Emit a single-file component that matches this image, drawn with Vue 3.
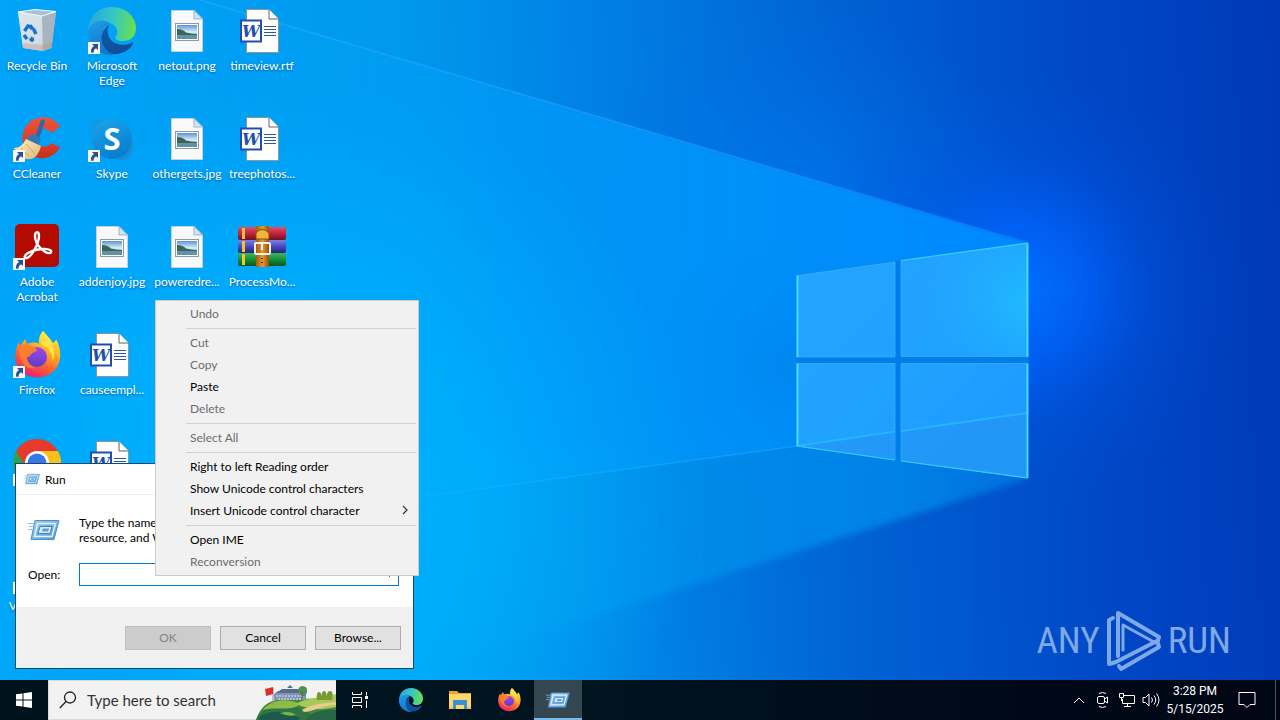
<script setup>
import { ref } from 'vue'

const shortcuts = [
  { icon: 'bin', label: 'Recycle Bin' },
  { icon: 'ccleaner', label: 'CCleaner', link: true },
  { icon: 'acrobat', label: 'Adobe Acrobat', link: true },
  { icon: 'firefox', label: 'Firefox', link: true },
  { icon: 'chrome', label: 'Google Chrome', link: true },
  { icon: 'vlc', label: 'VLC media player', link: true },
  { icon: 'edge', label: 'Microsoft Edge', link: true },
  { icon: 'skype', label: 'Skype', link: true },
  { icon: 'picture', label: 'addenjoy.jpg' },
  { icon: 'word', label: 'causeempl...' },
  { icon: 'word', label: '' },
  null,
  { icon: 'picture', label: 'netout.png' },
  { icon: 'picture', label: 'othergets.jpg' },
  { icon: 'picture', label: 'poweredre...' },
  null,
  null,
  null,
  { icon: 'word', label: 'timeview.rtf' },
  { icon: 'word', label: 'treephotos...' },
  { icon: 'winrar', label: 'ProcessMo...' },
]

const menuGroups = [
  [{ label: 'Undo', disabled: true }],
  [
    { label: 'Cut', disabled: true },
    { label: 'Copy', disabled: true },
    { label: 'Paste' },
    { label: 'Delete', disabled: true },
  ],
  [{ label: 'Select All', disabled: true }],
  [
    { label: 'Right to left Reading order' },
    { label: 'Show Unicode control characters' },
    { label: 'Insert Unicode control character', submenu: true },
  ],
  [{ label: 'Open IME' }, { label: 'Reconversion', disabled: true }],
]

const command = ref('')
</script>

<template>
  <div class="screen">
    <svg class="defs" aria-hidden="true">
      <defs>
        <linearGradient id="edgeTop" x1="0" y1="0.4" x2="1" y2="0.5">
          <stop offset="0" stop-color="#2aa5dc" /><stop offset="0.5" stop-color="#35c6c8" /><stop offset="1" stop-color="#6ae04c" />
        </linearGradient>
        <linearGradient id="edgeLeft" x1="0" y1="0" x2="0.4" y2="1">
          <stop offset="0" stop-color="#1d9fe6" /><stop offset="1" stop-color="#1276cf" />
        </linearGradient>
        <linearGradient id="edgeLow" x1="0" y1="0" x2="1" y2="1">
          <stop offset="0" stop-color="#0e5aa6" /><stop offset="1" stop-color="#114a94" />
        </linearGradient>
        <linearGradient id="skypeFill" x1="0" y1="0" x2="0.4" y2="1">
          <stop offset="0" stop-color="#1ba6ea" /><stop offset="1" stop-color="#087fd0" />
        </linearGradient>
        <linearGradient id="foxBody" x1="0.8" y1="0" x2="0.3" y2="1">
          <stop offset="0" stop-color="#fff04a" /><stop offset="0.4" stop-color="#ffab25" /><stop offset="0.7" stop-color="#ff5a35" /><stop offset="1" stop-color="#e91e78" />
        </linearGradient>
        <linearGradient id="foxCore" x1="0.5" y1="0" x2="0.4" y2="1">
          <stop offset="0" stop-color="#a146e8" /><stop offset="1" stop-color="#5540c8" />
        </linearGradient>
        <linearGradient id="cRed" x1="0" y1="0" x2="0" y2="1">
          <stop offset="0" stop-color="#f0533c" /><stop offset="1" stop-color="#c9301c" />
        </linearGradient>
        <linearGradient id="brush" x1="0" y1="0" x2="1" y2="1">
          <stop offset="0" stop-color="#fff0c2" /><stop offset="1" stop-color="#e0b878" />
        </linearGradient>
        <linearGradient id="binSide" x1="0" y1="0" x2="1" y2="1">
          <stop offset="0" stop-color="#dceaf3" /><stop offset="0.6" stop-color="#bccbd6" /><stop offset="1" stop-color="#a69f9f" />
        </linearGradient>
        <linearGradient id="photo" x1="0" y1="0" x2="0" y2="1">
          <stop offset="0" stop-color="#5b93da" /><stop offset="0.5" stop-color="#d9edf7" /><stop offset="1" stop-color="#7fb0cc" />
        </linearGradient>
        <linearGradient id="runFill" x1="0" y1="0" x2="1" y2="1">
          <stop offset="0" stop-color="#a5d0ef" /><stop offset="1" stop-color="#4e97d3" />
        </linearGradient>
        <linearGradient id="bookR" x1="0" y1="0" x2="0" y2="1">
          <stop offset="0" stop-color="#e0506a" /><stop offset="0.5" stop-color="#c02440" /><stop offset="1" stop-color="#701024" />
        </linearGradient>
        <linearGradient id="bookB" x1="0" y1="0" x2="0" y2="1">
          <stop offset="0" stop-color="#7d80e0" /><stop offset="0.5" stop-color="#484bc0" /><stop offset="1" stop-color="#262570" />
        </linearGradient>
        <linearGradient id="bookG" x1="0" y1="0" x2="0" y2="1">
          <stop offset="0" stop-color="#3cb860" /><stop offset="0.5" stop-color="#15913a" /><stop offset="1" stop-color="#07501c" />
        </linearGradient>
        <linearGradient id="strap" x1="0" y1="0" x2="1" y2="0">
          <stop offset="0" stop-color="#a65a10" /><stop offset="0.5" stop-color="#e09a30" /><stop offset="1" stop-color="#9a500c" />
        </linearGradient>
      </defs>

      <symbol id="arrow" viewBox="0 0 12 12">
        <rect width="12" height="12" fill="#f7f7fa" />
        <path d="M4 2h6v6L8 6.200C6 7.400 5.400 8.800 5.600 10.800H3.200C2.400 8 3.600 5.600 6 4z" fill="#28518f" />
      </symbol>

      <symbol id="bin" viewBox="0 0 48 48">
        <path d="M5 5 22 2.500 43 4.500 38.500 41 30 44 10 41z" fill="url(#binSide)" />
        <path d="M5 5 29 9 30 44 10 41z" fill="#dbe4ea" opacity=".75" />
        <path d="M29 9 43 4.500 38.500 41 30 44z" fill="#a9b4bf" />
        <path d="M5 5 22 2.500 43 4.500 29 9z" fill="#a7c2d4" stroke="#f4fafd" />
        <path d="M10 36l20 2 9-3-1 6-8 3-20-3z" fill="#c58d7d" opacity=".35" />
        <g fill="none" stroke="#1472c9" stroke-width="3.500">
          <path d="M11.500 24l3.500-5 3 1" /><path d="M20.500 22l2.500 5" /><path d="M21 32l-4 1M14 32l-3-4" />
        </g>
        <path d="M18 17l4 5-5 1zM19 29l-3 4 4 2.500z" fill="#1472c9" />
      </symbol>

      <symbol id="edge" viewBox="0 0 48 48">
        <path d="M0 25C0 10 10 0 24 0 39 0 48 11 48 21 48 30 42 34 35 34 29 34 26 32 28 29 31 26 29 18 22 16 12 13 3 18 0 25z" fill="url(#edgeTop)" />
        <path d="M0 25C2 15 13 10 22 16 18 18 13 23 14 32 15 41 22 47 27 48 12 49 0 39 0 25z" fill="url(#edgeLeft)" />
        <path d="M22 17C15 22 11 29 15 38 18 44 23 48 29 47 37 46 42 42 45 37 45 35 44 35 43 36 32 41 21 35 20 27 19 23 20 19 22 17z" fill="url(#edgeLow)" />
      </symbol>

      <symbol id="ccleaner" viewBox="0 0 48 48">
        <path d="M47 12C42 2 29-1 18 6 7 14 7 30 16 38 26 47 41 44 47 32L38 28C35 33 28 33 25 28 21 22 23 15 29 14 33 13 36 15 38 18z" fill="url(#cRed)" />
        <path d="M28 5q3-2 4 1L25 27l-4-2z" fill="#2b69a4" />
        <path d="M15 22q7-6 13 3l-3 6-12-5z" fill="#2f79b8" />
        <path d="M13 24 28 31C26 39 22 43 18 44 10 45 4 41 1 33 6 33 10 30 13 24z" fill="url(#brush)" />
        <path d="M8 33l8 8M13 29l9 10" stroke="#d0a466" fill="none" />
      </symbol>

      <symbol id="skype" viewBox="0 0 48 48">
        <circle cx="15" cy="16" r="12" fill="#1399e3" /><circle cx="33" cy="33" r="12" fill="#178ed8" />
        <circle cx="24" cy="24" r="20" fill="url(#skypeFill)" />
        <text x="24" y="35" text-anchor="middle" class="skype-letter">S</text>
      </symbol>

      <symbol id="acrobat" viewBox="0 0 48 48">
        <rect x="2" y="1" width="44" height="43" rx="5" fill="#b30b00" />
        <path d="M12 35c-2-3 6-8 16-9 10-1 12 3 9 4-5 1-15-8-15-17 0-5 4-5 4 0 0 8-9 24-14 22z" fill="none" stroke="#fff" stroke-width="2.400" stroke-linejoin="round" />
      </symbol>

      <symbol id="firefox" viewBox="0 0 48 48">
        <path d="M30 0C34 5 37 7 40 12 42 11 43 9 43 8 51 23 47 37 37 43 25 50 9 46 4 34 1 26 2 19 6 11L7 15 12 8 14 13C19 11 24 11 26 13 25 8 27 3 30 0z" fill="url(#foxBody)" />
        <circle cx="24" cy="26" r="10" fill="url(#foxCore)" />
        <path d="M6 14C11 14 14 12 14 13 18 13 25 18 24 20 20 21 18 23 16 26 11 24 15 36 23 37 13 40 4 29 6 14z" fill="#ff7f2d" opacity=".9" />
        <path d="M30 0C38 8 44 19 40 30 39 22 36 17 29 14 27 9 27 4 30 0z" fill="#ffe94a" opacity=".8" />
      </symbol>

      <symbol id="chrome" viewBox="0 0 48 48">
        <circle cx="24" cy="24" r="24" fill="#2fa14f" />
        <path d="M3.200 12A24 24 0 0 1 44.800 12H24L14 30z" fill="#e53a2c" />
        <path d="M44.800 12A24 24 0 0 1 24 48L34.500 30 24 12z" fill="#fbc116" />
        <circle cx="24" cy="24" r="12" fill="#fff" /><circle cx="24" cy="24" r="9.500" fill="#3b78e7" />
      </symbol>

      <symbol id="vlc" viewBox="0 0 48 48">
        <path d="M20 3h8l12 34H8z" fill="#f48b00" /><path d="M16 16h16l3 8H13z" fill="#fff" /><path d="M5 36h38l3 9H2z" fill="#f48b00" />
      </symbol>

      <symbol id="picture" viewBox="0 0 48 48">
        <path d="M8.500 3.500H31L39.500 12v32.500h-31z" fill="#f8f9fb" stroke="#c9d2dc" />
        <path d="M31 3.500V12h8.500z" fill="#cfe5f4" stroke="#9fb4c4" />
        <rect x="12.500" y="16.500" width="23" height="17" fill="#fff" stroke="#8d9aa5" />
        <rect x="14" y="18" width="20" height="14" fill="url(#photo)" />
        <path d="M14 22q6 0 9 3.500 5 1 11 1.500v1H14z" fill="#3a6656" />
        <path d="M14 28h20v4H14z" fill="#5f93ac" />
      </symbol>

      <symbol id="word" viewBox="0 0 48 48">
        <path d="M8.500 2.500H31L40.500 12v33.500h-32z" fill="#fff" stroke="#8e959c" />
        <path d="M31 2.500V12h9.500" fill="#fff" stroke="#5e6469" />
        <path d="M26 19.500h12M26 22.500h12M26 25.500h12M26 28.500h12" stroke="#2a579a" fill="none" />
        <rect x="3" y="13.500" width="20" height="21" fill="#fff" stroke="#1c4fae" stroke-width="2" />
        <text x="13" y="30" text-anchor="middle" class="word-letter">W</text>
      </symbol>

      <symbol id="winrar" viewBox="0 0 48 48">
        <rect y="4" width="48" height="13" rx="2" fill="url(#bookR)" />
        <rect y="17" width="48" height="13" rx="2" fill="url(#bookB)" />
        <rect y="30" width="48" height="13" rx="2" fill="url(#bookG)" />
        <path d="M4 5h3v11H4zM4 18h3v11H4zM4 31h3v11H4z" fill="#f2c531" />
        <rect x="18" y="3" width="13" height="41" fill="url(#strap)" />
        <path d="M18 10q6-7 13 0v6H18z" fill="#f3b63c" stroke="#8b4c0e" />
        <rect x="17" y="20" width="15" height="11" rx="1" fill="none" stroke="#f1f1ec" stroke-width="2" />
        <path d="M24 21v6" stroke="#fff" stroke-width="2" />
        <path d="M24 35v1M24 39v1" stroke="#5b2c05" stroke-width="2" />
      </symbol>

      <symbol id="run" viewBox="0 0 32 24">
        <path d="M7 2.500h24L26 21.500H3z" fill="url(#runFill)" stroke="#4a90cd" />
        <path d="M9.500 5.500h18L24 18.500H6.500z" fill="none" stroke="#e3f2fc" stroke-width="1.500" />
        <path d="M12 8.500h12L22 15.500H10z" fill="#d6ecfa" stroke="#3c82bf" />
        <path d="M15 10.500h6l-1 3h-6z" fill="#5b9fd6" />
        <path d="M0 5.500h6M1 8.500h4M0 11.500h4" stroke="#8cc0e6" fill="none" />
      </symbol>
    </svg>

    <main class="desktop">
      <svg class="wallpaper" viewBox="0 0 1280 680" preserveAspectRatio="xMidYMid slice" aria-hidden="true">
        <defs>
          <linearGradient id="sky" gradientUnits="userSpaceOnUse" x1="0" y1="300" x2="1280" y2="240">
            <stop offset="0" stop-color="#00a4f8" />
            <stop offset="0.32" stop-color="#0099ee" />
            <stop offset="0.5" stop-color="#007ce2" />
            <stop offset="0.68" stop-color="#005fd2" />
            <stop offset="0.85" stop-color="#0048c6" />
            <stop offset="1" stop-color="#003ab8" />
          </linearGradient>
          <linearGradient id="beam" gradientUnits="userSpaceOnUse" x1="200" y1="0" x2="1028" y2="0">
            <stop offset="0" stop-color="#00a4f8" stop-opacity=".2" />
            <stop offset="0.3" stop-color="#009ff8" stop-opacity=".6" />
            <stop offset="0.6" stop-color="#0092f8" />
            <stop offset="1" stop-color="#0088ff" />
          </linearGradient>
          <linearGradient id="beamLow" gradientUnits="userSpaceOnUse" x1="360" y1="0" x2="1028" y2="0">
            <stop offset="0" stop-color="#00a8f4" stop-opacity=".4" />
            <stop offset="0.45" stop-color="#0094ec" stop-opacity=".7" />
            <stop offset="0.8" stop-color="#0086e8" stop-opacity=".9" />
            <stop offset="1" stop-color="#0078e2" stop-opacity=".8" />
          </linearGradient>
          <radialGradient id="lowGlow" gradientUnits="userSpaceOnUse" cx="420" cy="680" r="420">
            <stop offset="0" stop-color="#00a6f4" stop-opacity=".9" /><stop offset="0.5" stop-color="#0090ea" stop-opacity=".5" /><stop offset="1" stop-color="#0070dc" stop-opacity="0" />
          </radialGradient>
          <radialGradient id="glow" gradientUnits="userSpaceOnUse" cx="1020" cy="290" r="220">
            <stop offset="0" stop-color="#0070ff" /><stop offset="0.3" stop-color="#0064ff" stop-opacity=".75" /><stop offset="0.6" stop-color="#0058ec" stop-opacity=".3" /><stop offset="1" stop-color="#0050e0" stop-opacity="0" />
          </radialGradient>
          <radialGradient id="upperGlow" gradientUnits="userSpaceOnUse" cx="800" cy="230" r="230">
            <stop offset="0" stop-color="#007cf8" stop-opacity=".7" /><stop offset="1" stop-color="#0070e8" stop-opacity="0" />
          </radialGradient>
          <radialGradient id="leftGlow" gradientUnits="userSpaceOnUse" cx="300" cy="480" r="400">
            <stop offset="0" stop-color="#00b6ff" /><stop offset="0.5" stop-color="#00b0ff" stop-opacity=".7" /><stop offset="1" stop-color="#00a8fc" stop-opacity="0" />
          </radialGradient>
          <radialGradient id="shade" gradientUnits="userSpaceOnUse" cx="790" cy="365" r="140">
            <stop offset="0" stop-color="#0082ea" stop-opacity=".6" /><stop offset="1" stop-color="#008af0" stop-opacity="0" />
          </radialGradient>
          <linearGradient id="pane" gradientUnits="userSpaceOnUse" x1="797" y1="250" x2="1028" y2="478">
            <stop offset="0" stop-color="#25a4ff" /><stop offset="0.5" stop-color="#20a2ff" /><stop offset="1" stop-color="#1c98ff" />
          </linearGradient>
          <radialGradient id="paneGlow" gradientUnits="userSpaceOnUse" cx="1028" cy="302" r="100">
            <stop offset="0" stop-color="#20bcff" stop-opacity=".9" /><stop offset="1" stop-color="#20b0ff" stop-opacity="0" />
          </radialGradient>
          <linearGradient id="ray" gradientUnits="userSpaceOnUse" x1="200" y1="0" x2="1028" y2="0">
            <stop offset="0" stop-color="#40baff" stop-opacity=".3" /><stop offset="0.5" stop-color="#30a4ff" stop-opacity=".5" /><stop offset="1" stop-color="#2090ff" stop-opacity=".3" />
          </linearGradient>
          <filter id="soft" x="-20%" y="-20%" width="140%" height="140%"><feGaussianBlur stdDeviation="1" /></filter>
          <filter id="softer" x="-20%" y="-20%" width="140%" height="140%"><feGaussianBlur stdDeviation="3" /></filter>
        </defs>
        <rect width="1280" height="680" fill="url(#sky)" />
        <circle cx="420" cy="680" r="420" fill="url(#lowGlow)" />
        <circle cx="800" cy="230" r="230" fill="url(#upperGlow)" />
        <circle cx="1020" cy="290" r="220" fill="url(#glow)" />
        <path d="M-20 460 797 446 901 400H1024V480L360 690H-20z" fill="url(#beamLow)" filter="url(#softer)" />
        <path d="M0-60 200 0 1028 243V415L797 446 0 553z" fill="url(#beam)" filter="url(#soft)" />
        <circle cx="300" cy="480" r="400" fill="url(#leftGlow)" />
        <circle cx="790" cy="365" r="140" fill="url(#shade)" />
        <path d="M200 0 1028 243" stroke="url(#ray)" stroke-width="1.500" />
        <path d="M420 497 797 446" stroke="#18b4ff" stroke-opacity=".5" stroke-width="1.500" />
        <path d="M797 275 1028 243V478L797 446z" fill="#007ee8" />
        <g fill="url(#pane)" stroke="#48bcff" stroke-opacity=".6">
          <path d="M797 275.500 895 262V357H797z" /><path d="M901 261 1027 243.500V356.500H901z" />
          <path d="M797 363.500H895V460L797 446z" /><path d="M901 363.500H1027V478L901 461z" />
        </g>
        <path d="M901 261 1027 243.500V356.500H901z" fill="url(#paneGlow)" />
        <path d="M797 446 895 431.500V460zM901 431 1027 413V478L901 461z" fill="#2496f6" opacity=".75" />
        <path d="M797 446 895 431.500M901 431 1027 413" stroke="#25b4ff" stroke-width="2" />
        <path d="M797.500 275.500V357M797.500 363.500V446M1027.500 243V357M1027.500 363.500V478" fill="none" stroke="#48e2ff" stroke-width="1.800" />
        <path d="M901 260.500 1028 243M901 461 1028 478M797 446 895 460" fill="none" stroke="#38ccff" stroke-width="1.200" />
      </svg>

      <div class="icon-grid">
        <template v-for="(item, i) in shortcuts" :key="i">
          <button v-if="item" type="button" class="shortcut">
            <span class="shortcut-icon">
              <svg class="glyph"><use :href="'#' + item.icon" /></svg>
              <svg v-if="item.link" class="link-arrow"><use href="#arrow" /></svg>
            </span>
            <span class="shortcut-label">{{ item.label }}</span>
          </button>
          <span v-else></span>
        </template>
      </div>

      <div class="watermark">
        <span>ANY</span>
        <svg viewBox="0 0 56 62" fill="none" stroke="currentColor" stroke-width="4" stroke-linejoin="round" stroke-linecap="round">
          <path d="M7 8 3 10V54L10 52 49 32" />
          <path d="M12 46V3L53 27 51 33" />
          <path d="M17 15 48 32 M17 15V40" stroke-width="3" />
          <path d="M13 56 15 59 53 37 51 31" />
        </svg>
        <span>RUN</span>
      </div>

      <section class="dialog" role="dialog" aria-labelledby="run-title">
        <header class="dialog-title">
          <svg><use href="#run" /></svg>
          <span id="run-title">Run</span>
        </header>
        <div class="dialog-body">
          <svg class="dialog-icon"><use href="#run" /></svg>
          <p>Type the name of a program, folder, document, or Internet resource, and Windows will open it for you.</p>
          <label for="run-command">Open:</label>
          <div class="combo">
            <input id="run-command" v-model="command" type="text" autocomplete="off" />
            <button type="button" aria-label="Show recent commands">
              <svg viewBox="0 0 9 6" fill="none" stroke="#404040"><path d="M1 1l3.500 3.500L8 1" /></svg>
            </button>
          </div>
        </div>
        <footer class="dialog-actions">
          <button type="button" disabled>OK</button>
          <button type="button">Cancel</button>
          <button type="button">Browse...</button>
        </footer>
      </section>

      <div class="menu" role="menu">
        <div v-for="(group, g) in menuGroups" :key="g" class="menu-group" role="group">
          <button v-for="item in group" :key="item.label" type="button" role="menuitem" :disabled="item.disabled">
            <span>{{ item.label }}</span>
            <svg v-if="item.submenu" viewBox="0 0 6 10" fill="none" stroke="#333" stroke-width="1.200"><path d="M1 1l4 4-4 4" /></svg>
          </button>
        </div>
      </div>
    </main>

    <footer class="taskbar">
      <button type="button" class="task" aria-label="Start">
        <svg width="16" height="16" viewBox="0 0 16 16" fill="#fff"><path d="M0 2.300 6.500 1.400V7.500H0zM7.500 1.200 16 0V7.500H7.500zM0 8.500H6.500V14.600L0 13.700zM7.500 8.500H16V16L7.500 14.800z" /></svg>
      </button>
      <div class="search">
        <svg class="lens" viewBox="0 0 18 18" fill="none" stroke="#222" stroke-width="1.300"><circle cx="11" cy="6.500" r="5.500" /><path d="M7 10.500.8 17" /></svg>
        <input type="text" placeholder="Type here to search" aria-label="Type here to search" />
        <svg class="scene" viewBox="0 0 80 40" aria-hidden="true">
          <path d="M0 40C5 26 12 20 28 19 42 18 52 20 80 17V40z" fill="#3f8a3e" />
          <path d="M0 40C6 28 16 24 30 24 46 27 56 33 60 40z" fill="#2f7544" />
          <path d="M7 30C14 20 30 17 44 24 36 32 20 26 7 30z" fill="#8dbb45" />
          <path d="M40 24C52 16 70 18 80 14V27C64 31 52 29 40 24z" fill="#a6c95a" />
          <path d="M46 30C54 25 66 23 80 22V25C66 25 60 31 48 32z" fill="#ecc993" />
          <path d="M4 36C18 29 32 31 44 38L42 40H3z" fill="#1c5a4b" />
          <path d="M24 33q10-3 16 2-8 2-16-2z" fill="#78b54b" />
          <path d="M52 36q14-8 28-6v10H50z" fill="#286645" />
          <path d="M18 14 22 11H46L50 14V20H18z" fill="#8193b5" />
          <path d="M20 13 26 9H42L48 13zM31 8 34 5 37 8z" fill="#566b91" />
          <path d="M20 16h28M22 19h25" stroke="#e1e7ef" stroke-dasharray="2 1" />
          <path d="M43 13q-2-6 3-7 6 0 5 6-1 5-5 4z" fill="#4b9159" /><path d="M46 11v9" stroke="#70543b" />
          <path d="M61 20q-1-8 2-8t3 8zM66 20q-1-9 2-9t3 9zM71 20q-1-9 3-9t2 9z" fill="#7b9930" />
          <path d="M17 8V25" stroke="#8f9095" /><path d="M9 9l8-2v7l-7 2z" fill="#e02d27" />
        </svg>
      </div>
      <button type="button" class="task" aria-label="Task View">
        <svg width="18" height="16" viewBox="0 0 18 16" fill="none" stroke="#fff"><path d="M1.500 0v2.500h9V0M1.500 16v-2.500h9V16M1.500 5.500h9v5h-9zM15.500 0v3.500M15.500 8.500V16" /><path d="M14 4h3v3h-3z" fill="#fff" stroke="none" /></svg>
      </button>
      <div class="apps">
        <button type="button" class="task" aria-label="Microsoft Edge"><svg width="24" height="24"><use href="#edge" /></svg></button>
        <button type="button" class="task" aria-label="File Explorer">
          <svg width="24" height="24" viewBox="0 0 24 24">
            <path d="M1 3h8l2 2h12v4H1z" fill="#e8a520" /><path d="M1 6h22v15H1z" fill="#ffd869" />
            <path d="M5 13q0-1 1-1h12q1 0 1 1v8h-3v-4H8v4H5z" fill="#3890d8" /><path d="M1 19h4v2H1zM19 19h4v2h-4z" fill="#f4c348" />
          </svg>
        </button>
        <button type="button" class="task" aria-label="Firefox"><svg width="24" height="24"><use href="#firefox" /></svg></button>
        <button type="button" class="task active" aria-label="Run"><svg width="24" height="18"><use href="#run" /></svg></button>
      </div>

      <div class="tray">
        <button type="button" aria-label="Show hidden icons"><svg width="12" height="8" viewBox="0 0 12 8"><path d="M1 7l5-5 5 5" /></svg></button>
        <button type="button" aria-label="Meet Now"><svg width="14" height="18" viewBox="0 0 14 18"><rect x="1.500" y="5.500" width="7" height="7" rx="1.500" /><path d="M8.500 8l3-2v6l-3-2M3 2.500Q6.500.5 10 2.500M3 15.500Q6.500 17.500 10 15.500" /></svg></button>
        <button type="button" aria-label="Network"><svg width="16" height="16" viewBox="0 0 16 16"><path d="M5 3.500h10.500v8H3.500V7M8.500 11.500v3M5 14.500h7M.5 1.500h4v4h-4zM2.500 5.500V9" /></svg></button>
        <button type="button" aria-label="Volume"><svg width="18" height="16" viewBox="0 0 18 16"><path d="M1 5.500h2.500L7 2v12l-3.500-3.500H1zM9.500 5.500q2 2.500 0 5M12 3.500q3.500 4.500 0 9M14.500 1.500q5 6.500 0 13" /></svg></button>
        <button type="button" class="clock"><span>3:28 PM</span><span>5/15/2025</span></button>
        <button type="button" class="notify" aria-label="Notifications"><svg width="18" height="18" viewBox="0 0 18 18"><path d="M1 1.500h16v12h-5L9 16.500 6 13.500H1z" /></svg></button>
        <button type="button" class="peek" aria-label="Show desktop"></button>
      </div>
    </footer>
  </div>
</template>

<style>
body {
  margin: 0;
}
</style>

<style scoped>
.screen {
  display: flex;
  flex-direction: column;
  height: 100vh;
  overflow: hidden;
  font: 12px/15px Lato, "Open Sans", sans-serif;
  color: #000;
}
button,
input {
  font: inherit;
  color: inherit;
  margin: 0;
  padding: 0;
  border: 0;
  background: none;
  border-radius: 0;
}
.defs {
  position: absolute;
  width: 0;
  height: 0;
}
.skype-letter {
  font: bold 31px "Open Sans", sans-serif;
  fill: #fff;
}
.word-letter {
  font: italic bold 16px "DejaVu Serif", serif;
  fill: #1c4fae;
}
.desktop {
  position: relative;
  flex: 1;
  min-height: 0;
  overflow: hidden;
  background: #0090f0;
}
.wallpaper {
  position: absolute;
  inset: 0;
  width: 100%;
  height: 100%;
}
.icon-grid {
  position: relative;
  display: grid;
  grid-auto-flow: column;
  grid-template-rows: repeat(6, 108px);
  grid-auto-columns: 75px;
}
.shortcut {
  display: flex;
  flex-direction: column;
  align-items: center;
  gap: 3px;
  padding: 7px 1px 0 0;
}
.shortcut-icon {
  position: relative;
  width: 48px;
  height: 48px;
}
.glyph {
  display: block;
  width: 48px;
  height: 48px;
}
.link-arrow {
  position: absolute;
  left: 0;
  bottom: 1px;
  width: 12px;
  height: 12px;
}
.shortcut-label {
  color: #fff;
  text-align: center;
  text-shadow: 0 1px 2px rgba(0, 40, 90, 0.6);
}
.watermark {
  position: absolute;
  right: 49px;
  bottom: 8px;
  display: flex;
  align-items: center;
  gap: 6px;
  font: 37px/62px "Roboto Condensed", "Open Sans Condensed", "DejaVu Sans Condensed", sans-serif;
  color: #7fa8e6;
}
.watermark svg {
  width: 56px;
  height: 62px;
}
.dialog {
  position: absolute;
  left: 15px;
  bottom: 11px;
  box-sizing: border-box;
  width: 399px;
  border: 1px solid #0c4a70;
  background: #fff;
}
.dialog-title {
  display: flex;
  align-items: center;
  gap: 5px;
  height: 30px;
  padding-left: 8px;
  border-bottom: 1px solid #eaf1f7;
}
.dialog-title svg {
  width: 16px;
  height: 12px;
}
.dialog-body {
  display: grid;
  grid-template-columns: 51px 1fr;
  align-items: center;
  row-gap: 18px;
  padding: 20px 14px 21px 12px;
}
.dialog-icon {
  width: 32px;
  height: 24px;
}
.dialog-body p {
  margin: 0;
}
.combo {
  display: flex;
  border: 1px solid #0078d7;
}
.combo input {
  flex: 1;
  min-width: 0;
  height: 21px;
  padding: 0 4px;
  outline: 0;
}
.combo button {
  width: 13px;
}
.combo svg {
  display: block;
  width: 9px;
  height: 6px;
}
.dialog-actions {
  display: flex;
  justify-content: flex-end;
  gap: 9px;
  padding: 19px 12px 18px;
  background: #f0f0f0;
}
.dialog-actions button {
  width: 86px;
  height: 24px;
  padding-bottom: 2px;
  border: 1px solid #adadad;
  background: #e1e1e1;
}
.dialog-actions button:disabled {
  border-color: #bfbfbf;
  background: #ccc;
  color: #838383;
}
.menu {
  position: absolute;
  left: 155px;
  top: 300px;
  box-sizing: border-box;
  width: 264px;
  padding: 2px;
  border: 1px solid #ccc;
  background: #f1f1f1;
}
.menu-group + .menu-group::before {
  content: "";
  display: block;
  height: 1px;
  margin: 3px 0 3px 28px;
  background: #d2d2d2;
}
.menu button {
  display: flex;
  align-items: center;
  justify-content: space-between;
  width: 100%;
  height: 22px;
  padding: 0 8px 2px 32px;
}
.menu button:disabled {
  color: #6d6d6d;
}
.menu svg {
  width: 6px;
  height: 10px;
}
.taskbar {
  display: flex;
  height: 40px;
  background: linear-gradient(90deg, #00131d, #001420 45%, #000817 80%, #000614);
  color: #fff;
}
.task {
  display: grid;
  place-items: center;
  width: 48px;
}
.apps {
  display: flex;
  gap: 1px;
  margin-left: 3px;
}
.active {
  background: #344650;
  box-shadow: inset 0 -2px #76b9ed;
}
.search {
  display: flex;
  align-items: center;
  box-sizing: border-box;
  width: 288px;
  padding-left: 10px;
  gap: 10px;
  border: 1px solid #d8dadb;
  border-right: 0;
  background: #f2f2f2;
  color: #222;
}
.lens {
  width: 18px;
  height: 18px;
}
.search input {
  flex: 1;
  min-width: 0;
  font-size: 15px;
  line-height: 20px;
  outline: 0;
}
.search input::placeholder {
  color: #333;
  opacity: 1;
}
.scene {
  width: 80px;
  height: 40px;
}
.tray {
  display: flex;
  align-items: stretch;
  margin-left: auto;
}
.tray button {
  display: grid;
  place-items: center;
  width: 24px;
}
.tray svg {
  fill: none;
  stroke: #fff;
  stroke-width: 1;
}
.tray .clock {
  align-content: center;
  width: 64px;
  font-family: Roboto, sans-serif;
  line-height: 18px;
}
.tray .notify {
  width: 40px;
  margin-right: 8px;
}
.tray .peek {
  width: 5px;
  border-left: 1px solid #4b5563;
}
</style>
